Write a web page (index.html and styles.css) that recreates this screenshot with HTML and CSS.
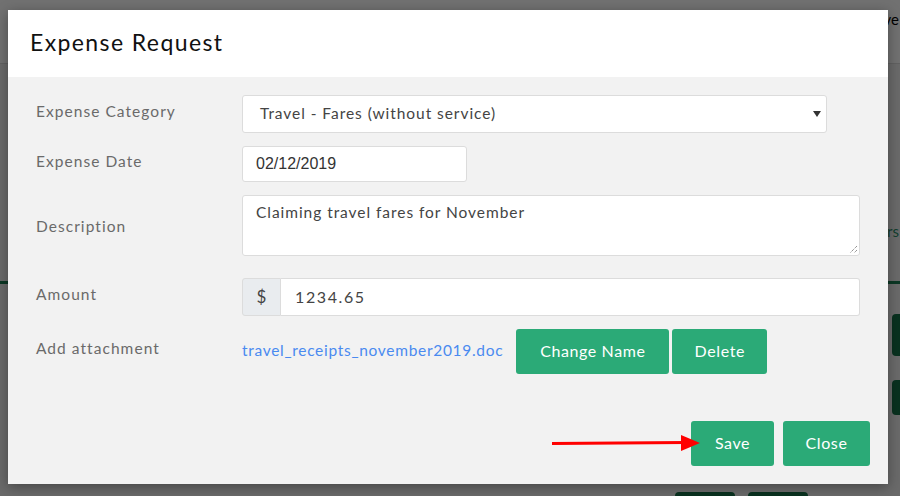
FILE: index.html
```html
<!DOCTYPE html>
<html lang="en">
<head>
<meta charset="utf-8">
<title>Expense Request</title>
<link rel="stylesheet" href="styles.css">
</head>
<body>
<div class="page">
  <header class="page-header">
    <span class="page-header-text">Save</span>
  </header>
  <main class="page-body">
    <div class="page-link-row"><span class="page-link">Users</span></div>
    <div class="page-rule"></div>
    <div class="page-actions">
      <span class="page-btn"></span>
      <span class="page-btn"></span>
    </div>
    <div class="page-bottom">
      <span class="page-bottom-btn"></span>
      <span class="page-bottom-btn"></span>
    </div>
  </main>
</div>

<div class="overlay"></div>

<div class="modal">
  <div class="modal-header">
    <h1 class="modal-title">Expense Request</h1>
  </div>
  <div class="modal-body">
    <form class="form-grid">
      <label class="form-label">Expense Category</label>
      <div class="select">
        <span>Travel - Fares (without service)</span>
        <svg class="caret" width="8" height="6" viewBox="0 0 8 6"><path d="M0 0h8L4 6z" fill="#333"/></svg>
      </div>

      <label class="form-label">Expense Date</label>
      <div class="date-input">02/12/2019</div>

      <label class="form-label label-center">Description</label>
      <div class="textarea">
        Claiming travel fares for November
        <svg class="resize" width="10" height="10" viewBox="0 0 10 10"><path d="M9 2L2 9M9 6L6 9" stroke="#666" stroke-width="1" stroke-dasharray="1 1"/></svg>
      </div>

      <label class="form-label row-gap-lg">Amount</label>
      <div class="input-group row-gap-lg">
        <span class="addon">$</span>
        <span class="amount">1234.65</span>
      </div>

      <label class="form-label">Add attachment</label>
      <div class="attach">
        <a class="attach-link">travel_receipts_november2019.doc</a>
        <div class="attach-btns">
          <button type="button" class="btn btn-change">Change Name</button>
          <button type="button" class="btn btn-delete">Delete</button>
        </div>
      </div>
    </form>
  </div>
  <div class="modal-footer">
    <svg class="arrow" width="150" height="20" viewBox="0 0 150 20"><line x1="0" y1="10.5" x2="134" y2="9.5" stroke="#f00" stroke-width="3"/><path d="M129 2L148 10L129 18z" fill="#f00"/></svg>
    <button type="button" class="btn btn-save">Save</button>
    <button type="button" class="btn btn-close">Close</button>
  </div>
</div>
</body>
</html>
```

FILE: styles.css
```css
* { box-sizing: border-box; }

html, body {
  margin: 0;
  padding: 0;
  width: 900px;
  height: 496px;
  overflow: hidden;
}

body {
  font-family: Lato, "Open Sans", sans-serif;
  position: relative;
  background: #ececec;
}

/* background page */
.page {
  width: 900px;
  height: 496px;
  display: flex;
  flex-direction: column;
}
.page-header {
  height: 64px;
  background: #fbfbfb;
  border-bottom: 1px solid #d8d8d8;
  display: flex;
  justify-content: flex-end;
  padding-top: 10px;
  padding-right: 1px;
}
.page-header-text {
  font-size: 15px;
  color: #000;
}
.page-body {
  flex: 1;
  background: #ececec;
  display: flex;
  flex-direction: column;
}
.page-link-row {
  display: flex;
  justify-content: flex-end;
  margin-top: 158px;
  padding-right: 1px;
}
.page-link {
  font-size: 15px;
  color: #2a8a68;
}
.page-rule {
  margin-top: 41px;
  height: 3px;
  background: #1a7a50;
}
.page-actions {
  display: flex;
  flex-direction: column;
  align-items: flex-end;
  gap: 24px;
  margin-top: 30px;
  margin-right: -40px;
}
.page-btn {
  width: 48px;
  height: 42px;
  background: #146e46;
  border-radius: 4px;
}
.page-btn + .page-btn { height: 35px; }
.page-bottom {
  display: flex;
  gap: 13px;
  margin-top: auto;
  margin-left: 675px;
  margin-bottom: -20px;
}
.page-bottom-btn {
  width: 60px;
  height: 24px;
  background: #146e46;
  border-radius: 4px;
}

.overlay {
  position: absolute;
  inset: 0;
  background: rgba(0, 0, 0, 0.55);
}

/* modal */
.modal {
  position: absolute;
  left: 8px;
  top: 10px;
  width: 880px;
  height: 474px;
  background: #f2f2f2;
  display: flex;
  flex-direction: column;
  box-shadow: 0 3px 12px rgba(0,0,0,0.35);
}
.modal-header {
  height: 67px;
  background: #fff;
  display: flex;
  align-items: center;
  padding-left: 22px;
}
.modal-title {
  margin: 0;
  font-weight: 400;
  font-size: 23px;
  letter-spacing: 1.4px;
  color: #111;
  padding-bottom: 4px;
}
.modal-body {
  padding: 18px 28px 0 28px;
}
.form-grid {
  display: grid;
  grid-template-columns: 206px 1fr;
  row-gap: 13px;
  margin: 0;
}
.form-label {
  align-self: center;
  margin-bottom: 7px;
  font-size: 15.5px;
  letter-spacing: 1.05px;
  color: #6a6a6a;
}
.form-label.label-center { margin-bottom: 0; }
.row-gap-lg { margin-top: 9px; }
.form-label.row-gap-lg { margin-top: 9px; margin-bottom: 7px; }

.select {
  width: 585px;
  height: 38px;
  background: #fff;
  border: 1px solid #dcdcdc;
  border-radius: 3px;
  display: flex;
  align-items: center;
  justify-content: space-between;
  padding: 0 5px 2px 17px;
  font-size: 15.5px;
  letter-spacing: 0.95px;
  color: #444;
}
.caret { margin-top: 2px; }

.date-input {
  width: 225px;
  height: 36px;
  background: #fff;
  border: 1px solid #dcdcdc;
  border-radius: 3px;
  display: flex;
  align-items: center;
  padding-left: 13px;
  font-family: "Liberation Sans", Arial, sans-serif;
  font-size: 16px;
  color: #333;
}

.textarea {
  position: relative;
  height: 61px;
  background: #fff;
  border: 1px solid #dcdcdc;
  border-radius: 3px;
  padding: 7px 13px;
  font-size: 15.5px;
  letter-spacing: 0.95px;
  color: #444;
}
.resize {
  position: absolute;
  right: 1px;
  bottom: 1px;
}

.input-group {
  display: flex;
  height: 38px;
}
.addon {
  width: 39px;
  background: #e9ecef;
  border: 1px solid #dcdcdc;
  border-radius: 3px 0 0 3px;
  display: flex;
  align-items: center;
  justify-content: center;
  padding-bottom: 2px;
  font-size: 17px;
  color: #444;
}
.amount {
  flex: 1;
  background: #fff;
  border: 1px solid #dcdcdc;
  border-left: none;
  border-radius: 0 3px 3px 0;
  display: flex;
  align-items: center;
  padding-left: 14px;
  padding-bottom: 2px;
  font-size: 16px;
  letter-spacing: 1.6px;
  color: #444;
}

.attach {
  display: flex;
  align-items: center;
  gap: 13px;
}
.attach-link {
  font-size: 15.5px;
  letter-spacing: 0.7px;
  color: #4a8af0;
  padding-bottom: 3px;
}
.attach-btns {
  display: flex;
  gap: 3px;
}

.btn {
  height: 45px;
  border: none;
  border-radius: 3px;
  background: #2baa77;
  color: #fff;
  font-family: Lato, "Open Sans", sans-serif;
  font-size: 16px;
  letter-spacing: 0.6px;
  padding: 0 0 3px 0;
}
.btn-change { width: 153px; }
.btn-delete { width: 95px; }

.modal-footer {
  position: relative;
  margin-top: auto;
  height: 63px;
  display: flex;
  justify-content: flex-end;
  align-items: flex-start;
  gap: 9px;
  padding-right: 18px;
}
.btn-save { width: 83px; }
.btn-close { width: 87px; }
.arrow {
  position: absolute;
  left: 544px;
  top: 12px;
}
```
